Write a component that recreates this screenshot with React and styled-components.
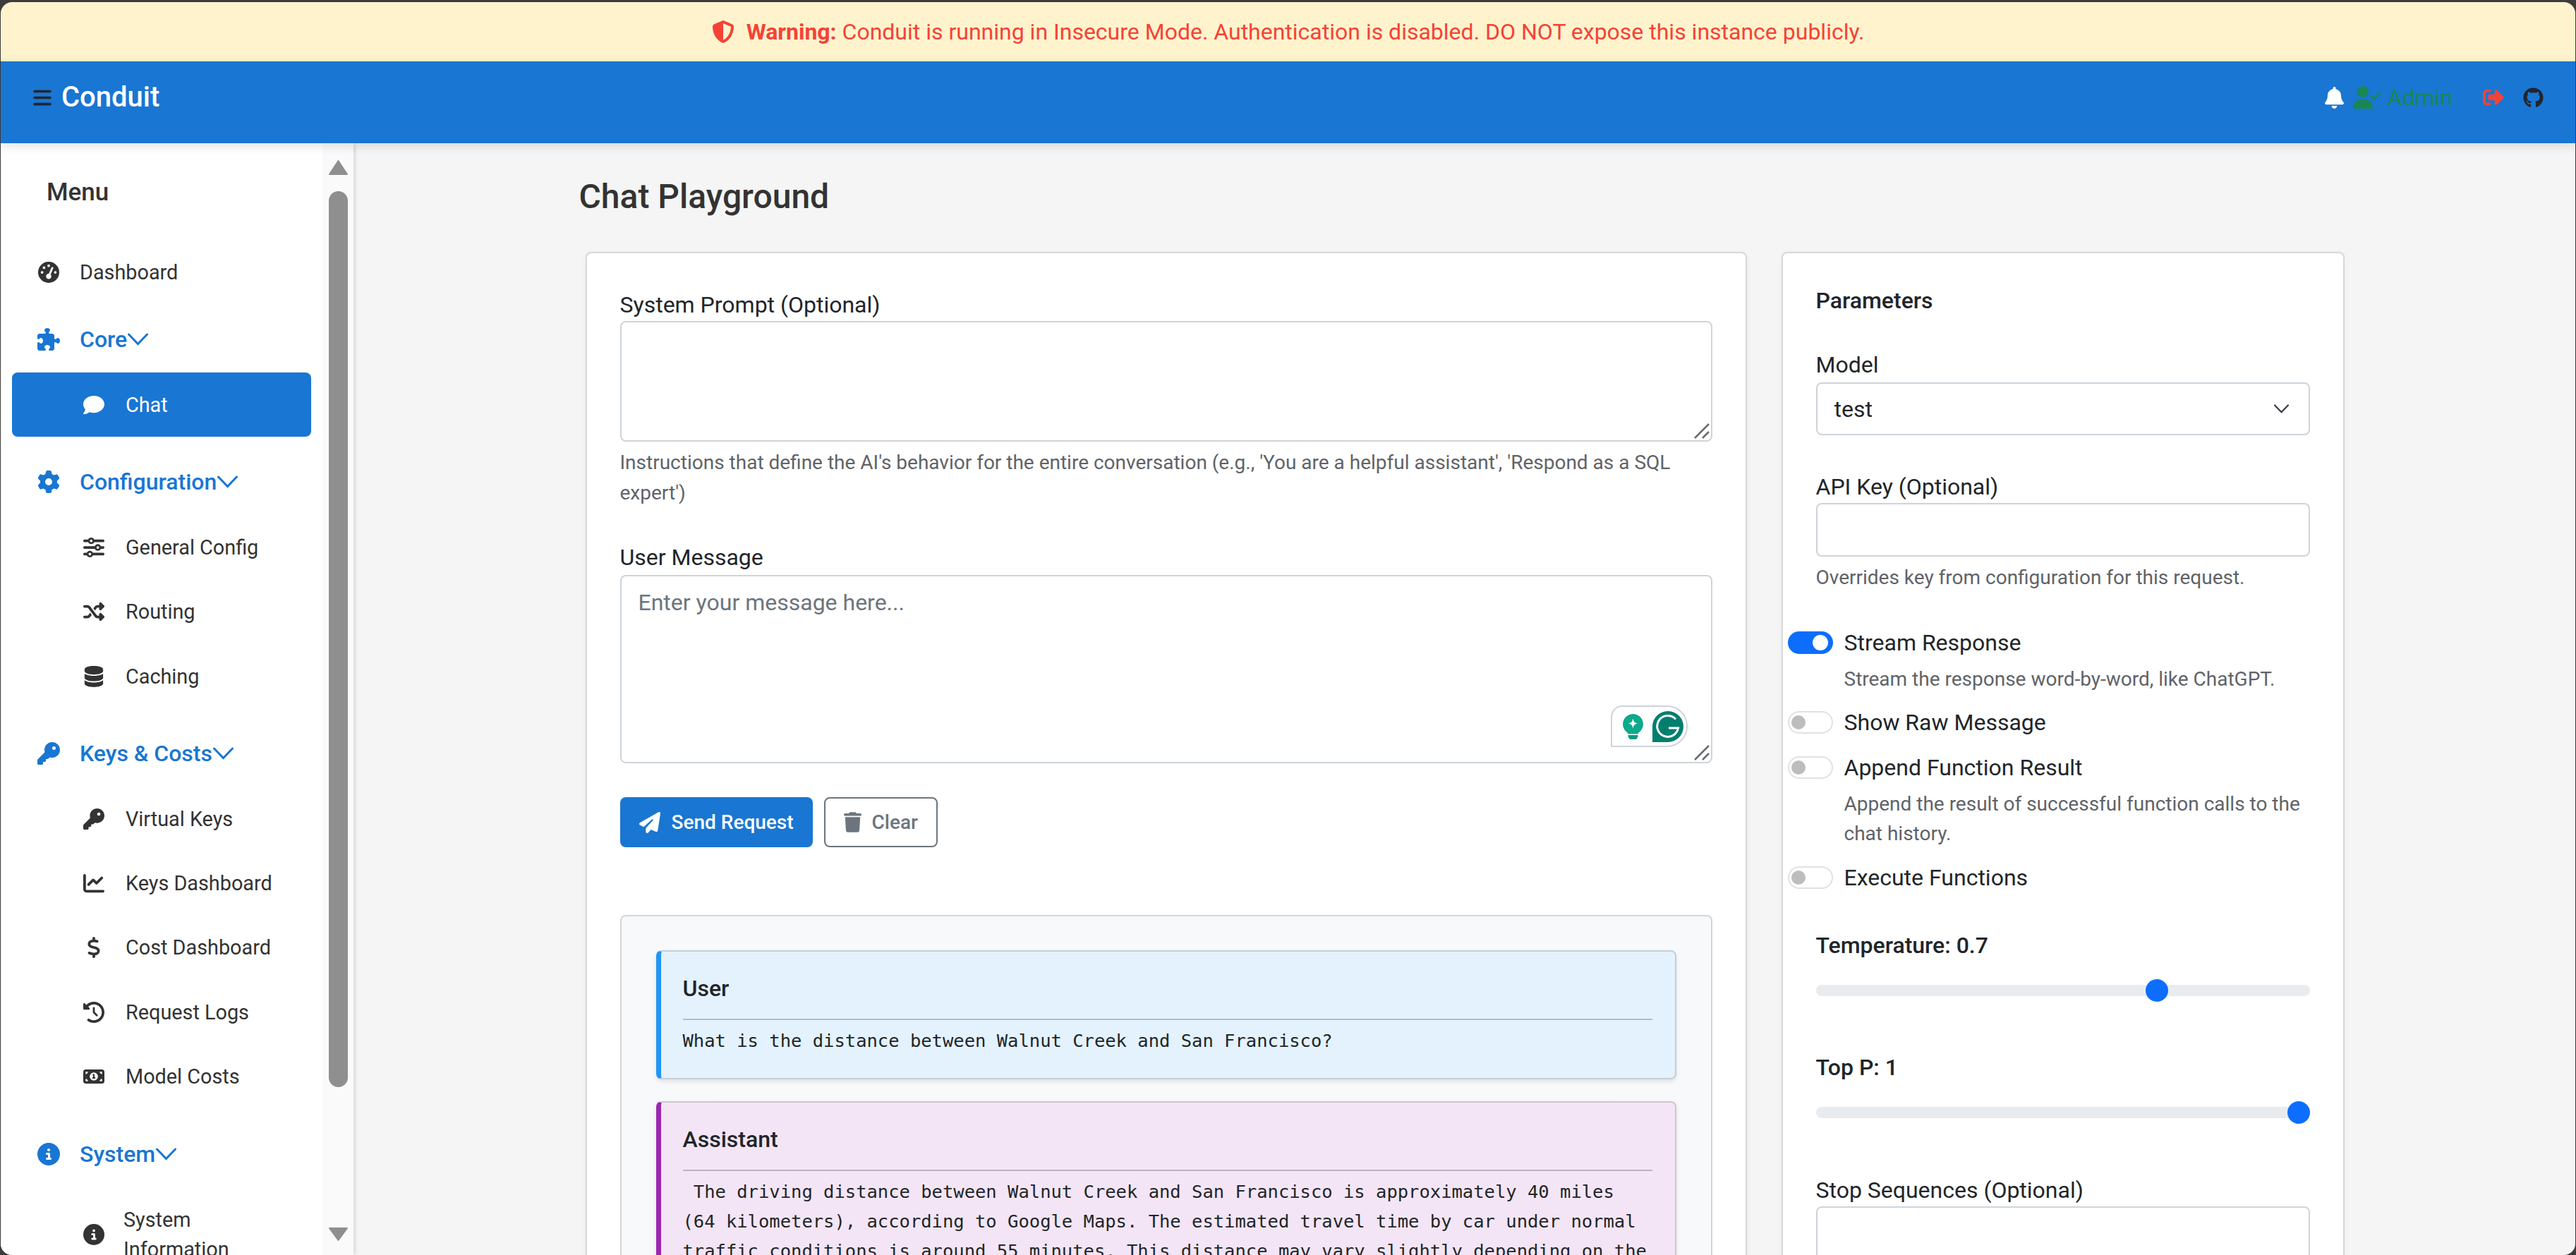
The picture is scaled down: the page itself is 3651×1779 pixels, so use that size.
import React from 'react';
import styled, { createGlobalStyle } from 'styled-components';
import { FaGithub, FaSignOutAlt } from 'react-icons/fa';
import {
	FaBars,
	FaBell,
	FaChartLine,
	FaCircleInfo,
	FaClockRotateLeft,
	FaComment,
	FaDatabase,
	FaDollarSign,
	FaGaugeHigh,
	FaGear,
	FaKey,
	FaMoneyBill1,
	FaPaperPlane,
	FaPuzzlePiece,
	FaShieldHalved,
	FaShuffle,
	FaSliders,
	FaTrash,
	FaUserCheck
} from 'react-icons/fa6';

const GlobalStyle = createGlobalStyle`
	html, body {
		margin: 0;
		height: 100%;
		overflow: hidden;
		background: #3c3c3c;
	}
	* {
		box-sizing: border-box;
	}
	body {
		font-family: Roboto, 'Liberation Sans', sans-serif;
		font-size: 32px;
		line-height: 42px;
		color: #212529;
	}
`;

const Chevron = ({ className }) => (
	<svg className={className} viewBox='0 0 29 18' fill='none' stroke='currentColor' strokeWidth='3' strokeLinecap='round'>
		<polyline points='1.5,2 14.5,15.5 27.5,2' />
	</svg>
);

const SidebarGroups = [
	{
		title: 'Core',
		icon: FaPuzzlePiece,
		items: [{ label: 'Chat', icon: FaComment, active: true }]
	},
	{
		title: 'Configuration',
		icon: FaGear,
		items: [
			{ label: 'General Config', icon: FaSliders },
			{ label: 'Routing', icon: FaShuffle },
			{ label: 'Caching', icon: FaDatabase }
		]
	},
	{
		title: 'Keys & Costs',
		icon: FaKey,
		items: [
			{ label: 'Virtual Keys', icon: FaKey },
			{ label: 'Keys Dashboard', icon: FaChartLine },
			{ label: 'Cost Dashboard', icon: FaDollarSign },
			{ label: 'Request Logs', icon: FaClockRotateLeft },
			{ label: 'Model Costs', icon: FaMoneyBill1 }
		]
	},
	{
		title: 'System',
		icon: FaCircleInfo,
		items: [{ label: 'System Information', icon: FaCircleInfo, narrow: true }]
	}
];

const App = () => {
	return (
		<>
			<GlobalStyle />
			<Frame>
				<Banner>
					<FaShieldHalved />
					<span>
						<strong>Warning:</strong> Conduit is running in Insecure Mode. Authentication is disabled. DO NOT expose this instance publicly.
					</span>
				</Banner>
				<Navbar>
					<Brand>
						<BarsIcon />
						Conduit
					</Brand>
					<NavActions>
						<BellIcon />
						<AdminBadge>
							<FaUserCheck />
							Admin
						</AdminBadge>
						<LogoutIcon />
						<GithubIcon />
					</NavActions>
				</Navbar>
				<Body>
					<Sidebar>
						<SideNav>
							<MenuTitle>Menu</MenuTitle>
							<TopLink>
								<IconBox><FaGaugeHigh /></IconBox>
								Dashboard
							</TopLink>
							{SidebarGroups.map((group) => (
								<Group key={group.title}>
									<GroupHeader>
										<GroupIconBox><group.icon /></GroupIconBox>
										<span>{group.title}</span>
										<GroupChevron />
									</GroupHeader>
									{group.items.map((item) => (
										<SubLink key={item.label} $active={item.active} $narrow={item.narrow}>
											<IconBox><item.icon /></IconBox>
											<SubLabel $narrow={item.narrow}>{item.label}</SubLabel>
										</SubLink>
									))}
								</Group>
							))}
						</SideNav>
						<ScrollRail>
							<ScrollArrow viewBox='0 0 27 21'><path d='M13.5 1 L26 20 H1 Z' strokeLinejoin='round' /></ScrollArrow>
							<ScrollThumb />
							<ScrollArrow viewBox='0 0 27 19'><path d='M1 1 H26 L13.5 18 Z' strokeLinejoin='round' /></ScrollArrow>
						</ScrollRail>
					</Sidebar>
					<Main>
						<Container>
							<PageTitle>Chat Playground</PageTitle>
							<Columns>
								<Card>
									<FieldLabel>System Prompt (Optional)</FieldLabel>
									<TextAreaWrap>
										<TextArea $height={171} />
										<ResizeGrip />
									</TextAreaWrap>
									<Hint>Instructions that define the AI's behavior for the entire conversation (e.g., 'You are a helpful assistant', 'Respond as a SQL expert')</Hint>
									<FieldLabel $top={49} $bottom={4}>User Message</FieldLabel>
									<TextAreaWrap>
										<TextArea $height={267} placeholder='Enter your message here...' />
										<GrammarlyBadge>
											<svg width='29' height='36' viewBox='0 0 29 36'>
												<path d='M14.500 0a14.500 14.500 0 0 0-9 25.800c1.200 1 1.800 1.700 2 2.700h14c.2-1 .8-1.700 2-2.700a14.500 14.500 0 0 0-9-25.800z' fill='#0fa98c' />
												<path d='M14.500 6.500c.9 4.700 2.300 6.100 7 7-4.700.9-6.100 2.300-7 7-.9-4.700-2.300-6.100-7-7 4.700-.9 6.100-2.300 7-7z' fill='#fff' />
												<path d='M7.500 30h14c0 3.500-1.500 6-4 6h-6c-2.500 0-4-2.500-4-6z' fill='#0a9a80' />
											</svg>
											<svg width='44' height='44' viewBox='0 0 44 44'>
												<path d='M22 0a22 22 0 0 1 0 44H0V22A22 22 0 0 1 22 0z' fill='#027e6f' />
												<path d='M33 11.500A15 15 0 1 0 36.500 24H23' fill='none' stroke='#fff' strokeWidth='3' />
											</svg>
										</GrammarlyBadge>
										<ResizeGrip />
									</TextAreaWrap>
									<ButtonRow>
										<SendButton><FaPaperPlane />Send Request</SendButton>
										<ClearButton><FaTrash />Clear</ClearButton>
									</ButtonRow>
									<Output>
										<Message $bg='#e3f2fd' $accent='#2196f3'>
											<MessageRole>User</MessageRole>
											<MessageRule />
											<MessageText>What is the distance between Walnut Creek and San Francisco?</MessageText>
										</Message>
										<Message $bg='#f3e5f5' $accent='#9c27b0'>
											<MessageRole>Assistant</MessageRole>
											<MessageRule />
											<MessageText>{' The driving distance between Walnut Creek and San Francisco is approximately 40 miles (64 kilometers), according to Google Maps. The estimated travel time by car under normal traffic conditions is around 55 minutes. This distance may vary slightly depending on the'}</MessageText>
										</Message>
									</Output>
								</Card>
								<ParamsCard>
									<ParamsTitle>Parameters</ParamsTitle>
									<FieldLabel $top={49} $bottom={4}>Model</FieldLabel>
									<SelectWrap>
										<Select defaultValue='test'>
											<option value='test'>test</option>
										</Select>
										<SelectChevron />
									</SelectWrap>
									<FieldLabel $top={52}>API Key (Optional)</FieldLabel>
									<TextInput />
									<Hint>Overrides key from configuration for this request.</Hint>
									<SwitchRow $top={50}>
										<Switch $on />
										<span>Stream Response</span>
										<SwitchHint>Stream the response word-by-word, like ChatGPT.</SwitchHint>
									</SwitchRow>
									<SwitchRow $top={19}>
										<Switch />
										<span>Show Raw Message</span>
									</SwitchRow>
									<SwitchRow $top={22}>
										<Switch />
										<span>Append Function Result</span>
										<SwitchHint>Append the result of successful function calls to the chat history.</SwitchHint>
									</SwitchRow>
									<SwitchRow $top={20}>
										<Switch />
										<span>Execute Functions</span>
									</SwitchRow>
									<SliderLabel $top={54}>Temperature: 0.7</SliderLabel>
									<Slider type='range' min='0' max='1' step='0.1' defaultValue='0.7' />
									<SliderLabel $top={72}>Top P: 1</SliderLabel>
									<Slider type='range' min='0' max='1' step='0.1' defaultValue='1' />
									<FieldLabel $top={73}>Stop Sequences (Optional)</FieldLabel>
									<TextInput />
								</ParamsCard>
							</Columns>
						</Container>
					</Main>
				</Body>
			</Frame>
		</>
	);
};

export default App;

const ResizeGrip = styled((props) => (
	<svg {...props} viewBox='0 0 22 22' fill='none' stroke='#6b6b6b' strokeWidth='2.5'>
		<line x1='1' y1='21' x2='21' y2='1' />
		<line x1='12' y1='21' x2='21' y2='12' />
	</svg>
))`
	position: absolute;
	right: 4px;
	bottom: 4px;
	width: 22px;
	height: 22px;
	pointer-events: none;
`;

const Frame = styled.div`
	height: 1779px;
	padding: 3px 1px 0;
	display: flex;
	flex-direction: column;
	overflow: hidden;
`;

const Banner = styled.div`
	height: 84px;
	flex: none;
	display: flex;
	align-items: center;
	justify-content: center;
	gap: 17px;
	background: #fff3cd;
	color: #f44336;
	font-size: 32px;
	border-radius: 16px 16px 0 0;

	svg {
		width: 32px;
		height: 32px;
	}

	strong {
		font-weight: 700;
	}
`;

const Navbar = styled.header`
	height: 116px;
	flex: none;
	position: relative;
	z-index: 2;
	display: flex;
	align-items: center;
	justify-content: space-between;
	padding: 0 45px 14px 46px;
	background: #1976d2;
	box-shadow: 0 4px 14px rgba(0, 0, 0, 0.12);
`;

const Brand = styled.div`
	display: flex;
	align-items: center;
	gap: 14px;
	color: #fff;
	font-size: 40px;
	font-weight: 500;
`;

const BarsIcon = styled(FaBars)`
	width: 26px;
	height: 29px;
	color: #212529;
`;

const NavActions = styled.div`
	display: flex;
	align-items: center;
`;

const BellIcon = styled(FaBell)`
	width: 27px;
	height: 31px;
	color: #fff;
	margin-right: 13px;
`;

const AdminBadge = styled.div`
	display: flex;
	align-items: center;
	gap: 9px;
	color: #198754;
	font-size: 32px;

	svg {
		width: 40px;
		height: 32px;
	}
`;

const LogoutIcon = styled(FaSignOutAlt)`
	width: 30px;
	height: 30px;
	color: #f44336;
	margin-left: 43px;
	transform: scaleX(1);
`;

const GithubIcon = styled(FaGithub)`
	width: 29px;
	height: 29px;
	color: #212529;
	margin-left: 27px;
`;

const Body = styled.div`
	flex: 1;
	min-height: 0;
	display: flex;
	background: #f5f5f5;
	border-radius: 0 0 16px 16px;
	overflow: hidden;
`;

const Sidebar = styled.aside`
	width: 500px;
	flex: none;
	display: flex;
	background: #fff;
	box-shadow: 2px 0 6px rgba(0, 0, 0, 0.14);
	position: relative;
	z-index: 1;
`;

const SideNav = styled.nav`
	width: 456px;
	flex: none;
	padding: 46px 16px 0 16px;
	overflow: hidden;
`;

const MenuTitle = styled.div`
	height: 48px;
	line-height: 48px;
	padding-left: 49px;
	font-size: 35px;
	font-weight: 500;
	color: #333;
	margin-bottom: 41px;
`;

const IconBox = styled.span`
	width: 36px;
	height: 36px;
	flex: none;
	display: flex;
	align-items: center;
	justify-content: center;

	svg {
		width: 30px;
		height: 30px;
	}
`;

const GroupIconBox = styled(IconBox)`
	svg {
		width: 32px;
		height: 32px;
	}
`;

const TopLink = styled.div`
	height: 96px;
	display: flex;
	align-items: center;
	gap: 26px;
	padding-left: 34px;
	font-size: 28.8px;
	color: #333;
`;

const Group = styled.div`
	margin-bottom: 17px;
`;

const GroupHeader = styled(TopLink)`
	height: 94px;
	color: #1976d2;
	font-size: 32px;
	font-weight: 500;
	gap: 0;

	> span:nth-child(2) {
		margin-left: 26px;
	}
`;

const GroupChevron = styled(Chevron)`
	width: 29px;
	height: 18px;
	margin-left: 1px;
`;

const SubLink = styled.div`
	height: 91.3px;
	margin-top: ${(p) => (p.$narrow ? '22px' : '0')};
	display: flex;
	align-items: center;
	gap: 27px;
	padding-left: 98px;
	border-radius: 8px;
	font-size: 28.8px;
	color: ${(p) => (p.$active ? '#fff' : '#333')};
	background: ${(p) => (p.$active ? '#1976d2' : 'transparent')};
`;

const SubLabel = styled.span`
	max-width: ${(p) => (p.$narrow ? '170px' : 'none')};
	margin-left: ${(p) => (p.$narrow ? '-3px' : '0')};
`;

const ScrollRail = styled.div`
	flex: 1;
	display: flex;
	flex-direction: column;
	align-items: center;
	padding: 24px 0 20px;
	background: #fafafa;
`;

const ScrollArrow = styled.svg`
	width: 27px;
	flex: none;
	height: 21px;
	fill: #8f8f8f;
	stroke: #8f8f8f;
	stroke-width: 2;
`;

const ScrollThumb = styled.div`
	width: 27px;
	height: 1270px;
	margin: 23px 0 198px;
	flex: none;
	border-radius: 14px;
	background: #8f8f8f;
`;

const Main = styled.main`
	flex: 1;
	min-width: 0;
	padding-top: 46px;
	overflow: hidden;
	display: flex;
	justify-content: center;
`;

const Container = styled.div`
	width: 2508px;
	flex: none;
`;

const PageTitle = styled.h1`
	margin: 0 0 48px -1px;
	height: 60px;
	line-height: 60px;
	font-size: 48px;
	font-weight: 500;
	color: #333;
`;

const Columns = styled.div`
	display: grid;
	grid-template-columns: 1646px 798px;
	gap: 49px;
	padding: 0 8px;
	align-items: start;
`;

const Card = styled.section`
	background: #fff;
	border: 2px solid #d8d8d8;
	border-radius: 8px;
	padding: 52px 47px 0;
	box-shadow: 0 2px 6px rgba(0, 0, 0, 0.06);
`;

const ParamsCard = styled(Card)`
	padding-top: 46px;
`;

const ParamsTitle = styled.div`
	height: 42px;
	line-height: 42px;
	font-size: 32px;
	font-weight: 500;
`;

const FieldLabel = styled.label`
	display: block;
	height: 42px;
	margin-top: ${(p) => p.$top || 0}px;
	margin-bottom: ${(p) => p.$bottom || 2}px;
	font-size: 32px;
	line-height: 42px;
`;

const TextArea = styled.textarea`
	display: block;
	width: 100%;
	height: ${(p) => p.$height}px;
	padding: 16px 24px;
	border: 2px solid #ced4da;
	border-radius: 8px;
	background: #fff;
	color: #212529;
	font-family: inherit;
	font-size: 32px;
	line-height: 42px;
	outline: none;
	resize: none;

	&::placeholder {
		color: #6c757d;
		opacity: 1;
	}
`;

const TextAreaWrap = styled.div`
	position: relative;
`;

const GrammarlyBadge = styled.div`
	position: absolute;
	right: 35px;
	bottom: 23px;
	width: 109px;
	height: 59px;
	display: flex;
	align-items: center;
	gap: 13px;
	padding-left: 15px;
	background: #fff;
	border: 2px solid #ced4da;
	border-radius: 16px 29px 29px 0;
`;

const Hint = styled.div`
	margin-top: 8px;
	font-size: 28px;
	line-height: 43px;
	color: #5f6368;
`;

const ButtonRow = styled.div`
	display: flex;
	gap: 16px;
	margin-top: 48px;
`;

const SendButton = styled.button`
	height: 71px;
	display: flex;
	align-items: center;
	gap: 16px;
	padding: 0 27px;
	border: none;
	border-radius: 8px;
	background: #1976d2;
	color: #fff;
	font-family: inherit;
	font-size: 28px;
	font-weight: 500;

	svg {
		width: 30px;
		height: 30px;
	}
`;

const ClearButton = styled(SendButton)`
	border: 2px solid #6c757d;
	background: #fff;
	color: #6c757d;
	padding: 0 26px;
	gap: 15px;

	svg {
		width: 25px;
		height: 29px;
	}
`;

const Output = styled.div`
	margin-top: 96px;
	padding: 48px 49px 0;
	border: 2px solid #d3d5d8;
	border-bottom: none;
	border-radius: 8px 8px 0 0;
	background: #f8f9fa;
`;

const Message = styled.article`
	margin-bottom: 31px;
	padding: 32px 32px 32px 31px;
	border: 2px solid rgba(0, 0, 0, 0.14);
	border-left: 7px solid ${(p) => p.$accent};
	border-radius: 8px;
	background: ${(p) => p.$bg};
	box-shadow: 0 3px 6px rgba(0, 0, 0, 0.1);
`;

const MessageRole = styled.div`
	height: 40px;
	line-height: 40px;
	font-size: 32px;
	font-weight: 500;
`;

const MessageRule = styled.div`
	height: 2px;
	margin: 23px 0 8px;
	background: rgba(0, 0, 0, 0.22);
`;

const MessageText = styled.div`
	font-family: 'DejaVu Sans Mono', monospace;
	font-size: 25.5px;
	line-height: 42px;
	white-space: pre-wrap;
	color: #212529;
`;

const SelectWrap = styled.div`
	position: relative;
`;

const Select = styled.select`
	display: block;
	width: 100%;
	height: 75px;
	padding: 0 24px;
	appearance: none;
	border: 2px solid #ced4da;
	border-radius: 8px;
	background: #fff;
	color: #212529;
	font-family: inherit;
	font-size: 32px;
	outline: none;
`;

const SelectChevron = styled(Chevron)`
	position: absolute;
	right: 30px;
	top: 30px;
	width: 21px;
	height: 15px;
	color: #343a40;
	pointer-events: none;
`;

const TextInput = styled.input`
	display: block;
	width: 100%;
	height: 76px;
	border: 2px solid #ced4da;
	border-radius: 8px;
	background: #fff;
	outline: none;
`;

const SwitchRow = styled.div`
	display: grid;
	grid-template-columns: 64px 1fr;
	column-gap: 16px;
	align-items: center;
	margin: ${(p) => p.$top}px 0 0 -40px;
	font-size: 32px;
	line-height: 42px;
`;

const Switch = styled.span`
	position: relative;
	display: block;
	width: 64px;
	height: 32px;
	border-radius: 16px;
	border: 2px solid ${(p) => (p.$on ? '#0d6efd' : '#dee2e6')};
	background: ${(p) => (p.$on ? '#0d6efd' : '#fff')};

	&::after {
		content: '';
		position: absolute;
		top: ${(p) => (p.$on ? '3px' : '4px')};
		${(p) => (p.$on ? 'right: 5px;' : 'left: 3px;')}
		width: ${(p) => (p.$on ? '22px' : '20px')};
		height: ${(p) => (p.$on ? '22px' : '20px')};
		border-radius: 50%;
		background: ${(p) => (p.$on ? '#fff' : '#bdbdbd')};
	}
`;

const SwitchHint = styled.div`
	grid-column: 2;
	margin-top: 10px;
	font-size: 28px;
	line-height: 42px;
	color: #5f6368;
`;

const SliderLabel = styled.div`
	height: 42px;
	margin-top: ${(p) => p.$top}px;
	margin-bottom: 27px;
	line-height: 42px;
	font-size: 32px;
	font-weight: 500;
`;

const Slider = styled.input`
	display: block;
	width: 100%;
	height: 32px;
	margin: 0;
	appearance: none;
	background: transparent;
	outline: none;

	&::-webkit-slider-runnable-track {
		height: 16px;
		border-radius: 8px;
		background: #e9ecef;
	}

	&::-webkit-slider-thumb {
		appearance: none;
		width: 32px;
		height: 32px;
		margin-top: -8px;
		border-radius: 50%;
		background: #0d6efd;
	}
`;
